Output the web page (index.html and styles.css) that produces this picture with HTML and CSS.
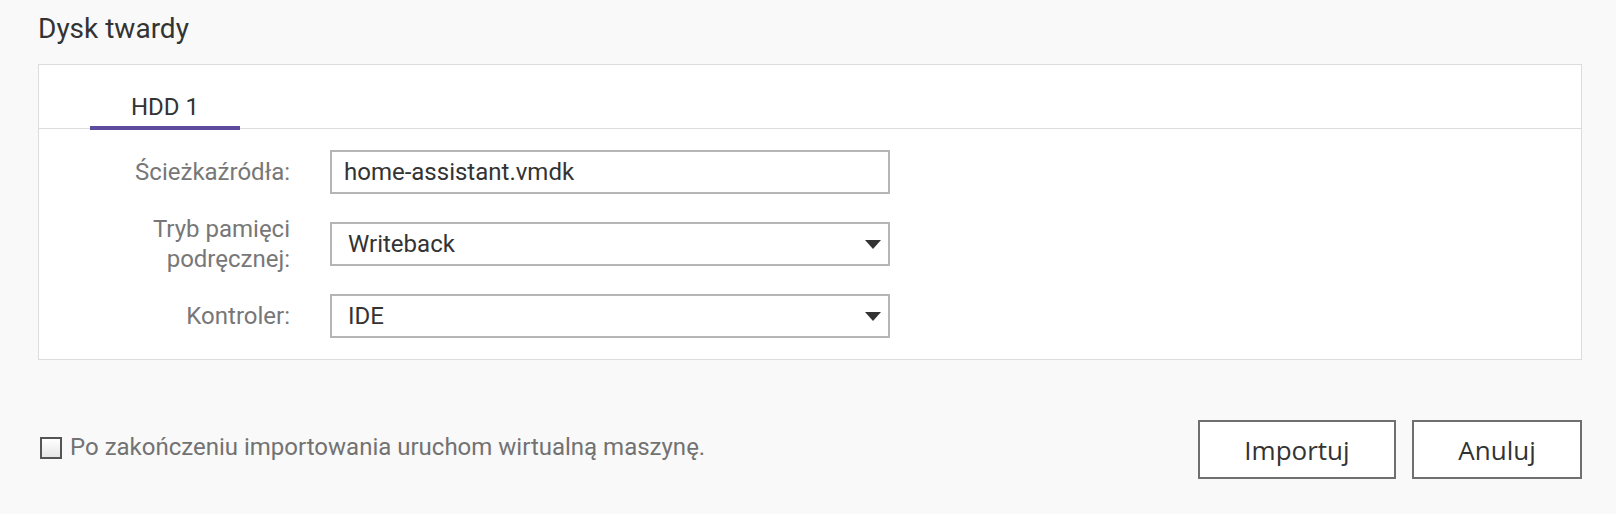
FILE: index.html
```html
<!DOCTYPE html>
<html lang="pl">
<head>
<meta charset="utf-8">
<title>Dysk twardy</title>
<link rel="stylesheet" href="styles.css">
</head>
<body>
<div class="page">
  <h2 class="title">Dysk twardy</h2>
  <section class="panel">
    <div class="tabs">
      <div class="tab active">HDD 1</div>
    </div>
    <div class="form">
      <div class="label">Ścieżkaźródła:</div>
      <div class="field">home-assistant.vmdk</div>

      <div class="label two-line">Tryb pamięci<br>podręcznej:</div>
      <div class="field select">Writeback
        <svg class="arrow" width="16" height="9" viewBox="0 0 16 9"><path d="M0 0H16L8 9Z" fill="#333"/></svg>
      </div>

      <div class="label">Kontroler:</div>
      <div class="field select">IDE
        <svg class="arrow" width="16" height="9" viewBox="0 0 16 9"><path d="M0 0H16L8 9Z" fill="#333"/></svg>
      </div>
    </div>
  </section>
  <div class="footer">
    <label class="check"><span class="box"></span><span class="check-text">Po zakończeniu importowania uruchom wirtualną maszynę.</span></label>
    <div class="buttons">
      <button class="btn btn-import">Importuj</button>
      <button class="btn btn-cancel">Anuluj</button>
    </div>
  </div>
</div>
</body>
</html>
```
FILE: styles.css
```css
html, body {
  margin: 0;
  padding: 0;
  background: #f9f9f9;
}
body {
  font-family: Roboto, "Liberation Sans", sans-serif;
  color: #333;
}
.page {
  padding: 13px 34px 0 38px;
}
.title {
  margin: 0 0 19px 0;
  font-size: 28px;
  line-height: 32px;
  font-weight: 400;
  color: #333;
}
.panel {
  background: #fff;
  border: 1px solid #dcdcdc;
}
.tabs {
  height: 64px;
  box-sizing: border-box;
  border-bottom: 1px solid #dcdcdc;
  display: flex;
  align-items: flex-start;
  padding-left: 51px;
}
.tab {
  width: 150px;
  height: 65px;
  box-sizing: border-box;
  padding-top: 30px;
  text-align: center;
  font-size: 24px;
  line-height: 24px;
  color: #333;
}
.tab.active {
  border-bottom: 4px solid #5e4b9c;
}
.form {
  display: grid;
  grid-template-columns: 251px 560px;
  grid-auto-rows: 44px;
  column-gap: 40px;
  row-gap: 28px;
  align-items: center;
  padding: 21px 0 21px 0;
}
.label {
  text-align: right;
  font-size: 24px;
  line-height: 28px;
  color: #777;
}
.label.two-line {
  line-height: 30px;
}
.field {
  height: 44px;
  box-sizing: border-box;
  border: 2px solid #b5b5b5;
  background: #fff;
  padding: 0 7px 0 12px;
  font-size: 24px;
  line-height: 40px;
  color: #333;
  display: flex;
  align-items: center;
  justify-content: space-between;
}
.field.select {
  padding-left: 16px;
}
.arrow {
  display: block;
  flex: none;
}
.footer {
  display: flex;
  justify-content: space-between;
  align-items: center;
  margin-top: 60px;
}
.check {
  display: flex;
  align-items: center;
  gap: 8px;
  padding-left: 2px;
  margin-bottom: 6px;
}
.box {
  width: 22px;
  height: 22px;
  box-sizing: border-box;
  border: 2px solid #555;
  background: linear-gradient(#ffffff, #e6e6e6);
  margin-top: 2px;
}
.check-text {
  font-size: 24px;
  line-height: 28px;
  color: #727272;
}
.buttons {
  display: flex;
  gap: 16px;
}
.btn {
  height: 59px;
  box-sizing: border-box;
  border: 2px solid #6f6f6f;
  background: #fff;
  font-family: "Open Sans", "Noto Sans", sans-serif;
  font-size: 26px;
  color: #333;
  padding: 0;
  margin: 0;
}
.btn-import {
  width: 198px;
}
.btn-cancel {
  width: 170px;
}
```
